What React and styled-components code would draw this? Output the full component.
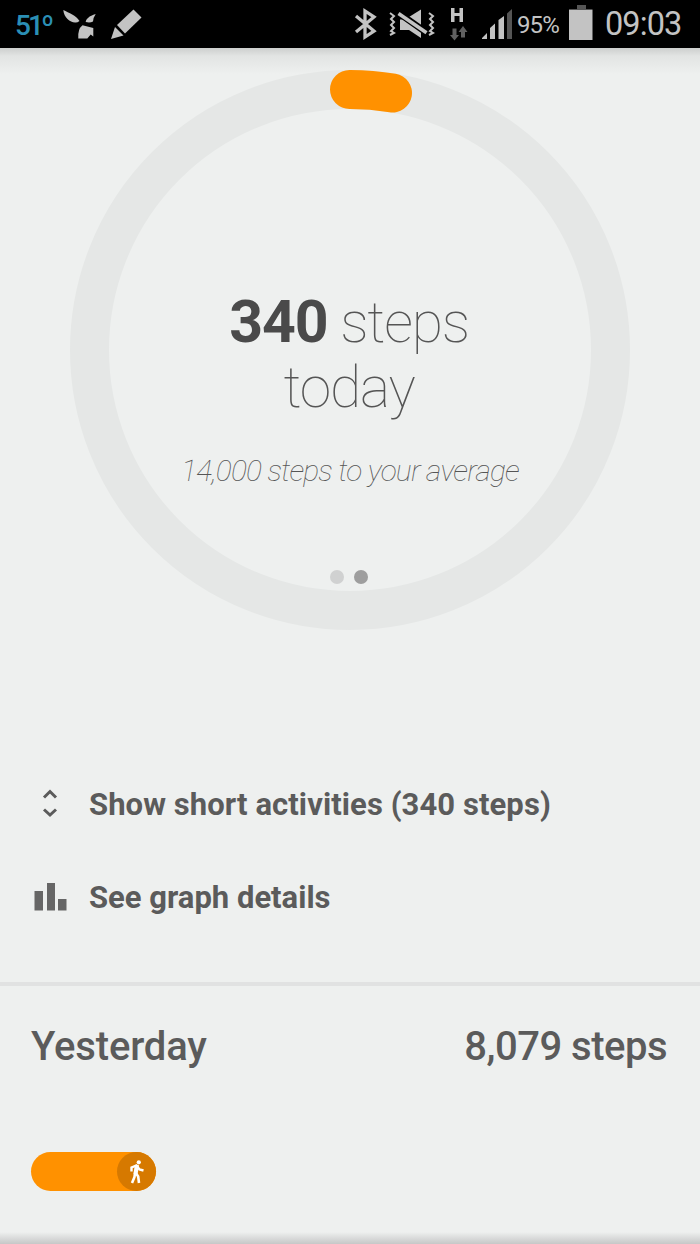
import React, { Component } from 'react';
import styled, { createGlobalStyle } from 'styled-components';

const GlobalStyle = createGlobalStyle`
  * { box-sizing: border-box; }
  body {
    margin: 0;
    background: #eef0ef;
    font-family: Roboto, "Noto Sans", sans-serif;
  }
`;
const Screen = styled.div`
  display: flex;
  flex-direction: column;
  width: 700px;
  height: 1244px;
  overflow: hidden;
  background:
    linear-gradient(to bottom, #eef0ef00, #c6c7c7) bottom / 100% 12px no-repeat,
    #eef0ef;
`;
const StatusBar = styled.header`
  display: flex;
  align-items: flex-start;
  flex: none;
  height: 48px;
  background: #000;
`;
const StatusIcon = styled.svg`
  display: block;
  flex: none;
  width: ${props => props.$w}px;
  height: 48px;
  margin-left: ${props => props.$gap || 0}px;
  fill: #c3c3c3;
`;
const StatusText = styled.span`
  flex: none;
  width: ${props => props.$w}px;
  margin-left: ${props => props.$gap || 0}px;
  font-size: ${props => props.$size}px;
  font-weight: ${props => props.$weight || 400};
  line-height: ${props => props.$line || 48}px;
  letter-spacing: ${props => props.$spacing || 0}px;
  white-space: nowrap;
  color: ${props => props.$color || '#c3c3c3'};
`;
const Spacer = styled.div`
  flex: 1;
`;
const Summary = styled.section`
  display: grid;
  justify-content: center;
  flex: none;
  height: 710px;
  padding-top: 22px;
  background: linear-gradient(to bottom, #cdcfce, #e2e4e3 8px, #eef0ef00 26px);
`;
const Ring = styled.svg`
  grid-area: 1 / 1;
  width: 560px;
  height: 560px;
  fill: none;
  stroke-width: 39;
`;
const RingContent = styled.div`
  grid-area: 1 / 1;
  display: flex;
  flex-direction: column;
  align-items: center;
  height: 560px;
  padding: 220px 2px 0 0;
  color: #555;
`;
const Steps = styled.h1`
  margin: 0;
  font-size: 57px;
  font-weight: 100;
  line-height: 65px;
  letter-spacing: -1.2px;
  white-space: nowrap;
  b {
    font-size: 59px;
    font-weight: 700;
    line-height: 1;
    letter-spacing: -1px;
    color: #4a4a4a;
  }
`;
const Remaining = styled.p`
  margin: 33px 0 0 2px;
  font-size: 30px;
  font-style: italic;
  font-weight: 100;
  line-height: 36px;
  letter-spacing: -0.83px;
  white-space: nowrap;
`;
const Dots = styled.div`
  display: flex;
  gap: 9.5px;
  margin-top: 80.5px;
`;
const Dot = styled.i`
  width: 14px;
  height: 14px;
  border-radius: 50%;
  background: ${props => props.$active ? '#9e9e9e' : '#d0d1d1'};
`;
const Actions = styled.nav`
  display: flex;
  flex-direction: column;
  flex: none;
  height: 224px;
`;
const Action = styled.a`
  display: flex;
  align-items: center;
  height: 93px;
  padding-left: 30px;
  font-size: 31px;
  font-weight: 700;
  letter-spacing: ${props => props.$spacing || 0}px;
  white-space: nowrap;
  color: #5b5b5b;
  svg {
    width: 40px;
    height: 40px;
    margin-right: 19px;
  }
`;
const Day = styled.section`
  flex: 1;
  border-top: 4px solid #e1e2e2;
  padding: 34px 33px 0 31px;
`;
const DayHeader = styled.div`
  display: flex;
  justify-content: space-between;
  font-size: 40px;
  font-weight: 500;
  line-height: 54px;
  color: #5b5b5b;
`;
const DayLabel = styled.span`
  letter-spacing: ${props => props.$spacing || 0}px;
`;
const ActivityPill = styled.div`
  display: flex;
  justify-content: flex-end;
  width: 125px;
  height: 39px;
  margin-top: 78px;
  border-radius: 20px;
  background: #ff9100;
`;
const ActivityIcon = styled.div`
  width: 39px;
  height: 39px;
  border-radius: 50%;
  background: #d67900;
`;

export default class App extends Component {
  renderStatusBar = () => {
    return (
      <StatusBar>
        <StatusText $w={36} $gap={15} $size={28} $weight={500} $line={52} $spacing={-2.8} $color="#2b8fb5">51º</StatusText>
        <StatusIcon $w={34} $gap={12} viewBox="0 0 34 48">
          <path d="M0.300 10C6 13 13 15 16.500 21Q14 23 12 22.500C7 22 1 18 0.300 10Z" />
          <path d="M32.700 14C26 16 23 19 22.700 22Q27 23 30 21.500Q30 18 32.700 14Z" />
          <path d="M19.500 25.200L30.300 28V36.500L27.700 34.500L24.300 38.500H15.300Q14.500 29 19.500 25.200Z" />
        </StatusIcon>
        <StatusIcon $w={32} $gap={13} viewBox="0 0 32 48">
          <path d="M23.500 9.500L31.500 17.500L15 33.500L7 25Z" />
          <path d="M5 27L13.500 35.500L1 39Z" />
        </StatusIcon>
        <Spacer />
        <StatusIcon $w={24} viewBox="0 0 24 48">
          <path d="M2 16L20 31L11 37V11L20 17L2 32" fill="none" stroke="#c3c3c3" strokeWidth="3.300" />
        </StatusIcon>
        <StatusIcon $w={46} $gap={11} viewBox="0 0 46 48">
          <path d="M11 19.500H14L32 32V38L20 30H11Z" />
          <path d="M20 17L32 9.500V26Z" />
          <path d="M9 12.500L38 33" fill="none" stroke="#000" strokeWidth="6.500" />
          <path d="M9.500 13.500L37.500 32.700" fill="none" stroke="#c3c3c3" strokeWidth="3.600" />
          <path d="M1 13L5 16L2 19L5 22L2 25L5 28L2 31L5 33L1 35M40 13L44 16L41 19L44 22L41 25L44 28L41 31L44 33L40 35" fill="none" stroke="#c3c3c3" strokeWidth="2" />
        </StatusIcon>
        <StatusIcon $w={18} $gap={15} viewBox="0 0 18 48">
          <path d="M1 8H4.500V13H9.500V8H13V22H9.500V16H4.500V22H1Z" />
          <path d="M2.500 28.500H6.500V35H9L4.500 40.500L0 35H2.500ZM11 37.500V32H8.500L13 26L17.500 32H15V37.500Z" fill="#606060" />
        </StatusIcon>
        <StatusIcon $w={31} $gap={14} viewBox="0 0 31 48">
          <path d="M-1 39L5 33V39ZM8 28L13 23.500V39H8ZM16.500 20L22 16V39H16.500Z" />
          <path d="M25 13.500L30 9V39H25Z" fill="#555" />
        </StatusIcon>
        <StatusText $w={44} $gap={4} $size={24} $line={50} $spacing={-0.9}>95%</StatusText>
        <StatusIcon $w={24} $gap={8} viewBox="0 0 24 48">
          <path d="M8 5H17V9H23.500V10H0V9H8Z" fill="#555" />
          <path d="M0 10H23.500V40H0Z" />
        </StatusIcon>
        <StatusText $w={95} $gap={12} $size={32.5} $spacing={-0.9}>09:03</StatusText>
      </StatusBar>
    );
  }
  render() {
    return (
      <Screen>
        <GlobalStyle />
        {this.renderStatusBar()}
        <Summary>
          <Ring viewBox="0 0 560 560">
            <circle cx="280" cy="280" r="260.500" stroke="#e5e7e6" />
            <path d="M279.500 19.500A260.500 260.500 0 0 1 322.500 23" stroke="#ff9100" strokeLinecap="round" />
          </Ring>
          <RingContent>
            <Steps><b>340</b> steps</Steps>
            <Steps>today</Steps>
            <Remaining>14,000 steps to your average</Remaining>
            <Dots>
              <Dot />
              <Dot $active />
            </Dots>
          </RingContent>
        </Summary>
        <Actions>
          <Action $spacing={0.08}>
            <svg viewBox="0 0 40 40" fill="none" stroke="#5b5b5b" strokeWidth="3">
              <path d="M14 12.500L20 6.500L26 12.500M14 24.500L20 30L26 24.500" />
            </svg>
            Show short activities (340 steps)
          </Action>
          <Action>
            <svg viewBox="0 0 40 40" fill="#666">
              <path d="M4.500 13H13V32.500H4.500ZM17 5H25V32.500H17ZM28 21H36.500V32.500H28Z" />
            </svg>
            See graph details
          </Action>
        </Actions>
        <Day>
          <DayHeader>
            <DayLabel $spacing={-0.15}>Yesterday</DayLabel>
            <DayLabel $spacing={-0.5}>8,079 steps</DayLabel>
          </DayHeader>
          <ActivityPill>
            <ActivityIcon>
              <svg width="39" height="39" viewBox="0 0 39 39" fill="none" stroke="#fff">
                <circle cx="21.800" cy="10.300" r="2.100" fill="#fff" stroke="none" />
                <path d="M14.500 19.500V15.500L19.500 13.500L22.500 17.500L26.500 18.500" strokeWidth="2.400" />
                <path d="M20 13L18.500 22" strokeWidth="4.200" />
                <path d="M18 21L17.500 25L15 31M18.800 21L21.200 24.500L22 31" strokeWidth="2.600" />
              </svg>
            </ActivityIcon>
          </ActivityPill>
        </Day>
      </Screen>
    );
  }
}
